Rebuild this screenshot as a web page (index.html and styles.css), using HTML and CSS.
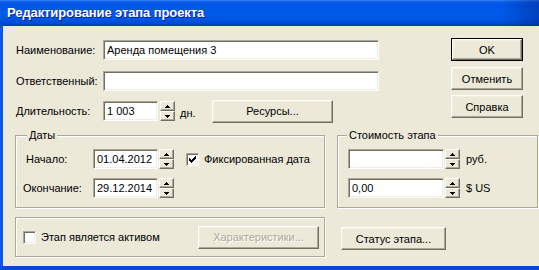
FILE: index.html
```html
<!DOCTYPE html>
<html lang="ru">
<head>
<meta charset="utf-8">
<title>Редактирование этапа проекта</title>
<link rel="stylesheet" href="styles.css">
</head>
<body>
<div class="window">
  <div class="titlebar"><span class="title">Редактирование этапа проекта</span></div>
  <div class="frame">
    <div class="client">
      <div class="top">
        <div class="fields">
          <div class="row r1">
            <span class="lbl">Наименование:</span>
            <div class="input w-name">Аренда помещения 3</div>
          </div>
          <div class="row r2">
            <span class="lbl">Ответственный:</span>
            <div class="input w-name"></div>
          </div>
          <div class="row r3">
            <span class="lbl">Длительность:</span>
            <div class="input w-dur">1 003</div>
            <div class="spin"><span class="up"><svg width="5" height="3" viewBox="0 0 5 3"><path d="M2 0h1v1h1v1h1v1H0V2h1V1h1z"/></svg></span><span class="down"><svg width="5" height="3" viewBox="0 0 5 3"><path d="M0 0h5v1H4v1H3v1H2V2H1V1H0z"/></svg></span></div>
            <span class="unit-dn">дн.</span>
            <button class="btn w-res">Ресурсы...</button>
          </div>
        </div>
        <div class="actions">
          <div class="default"><button class="btn w-act">OK</button></div>
          <button class="btn w-act a2">Отменить</button>
          <button class="btn w-act a3">Справка</button>
        </div>
      </div>

      <div class="middle">
        <div class="group dates">
          <span class="legend lg-dates">Даты</span>
          <div class="grow g1">
            <span class="dl dl1">Начало:</span>
            <div class="input w-date">01.04.2012</div>
            <div class="spin"><span class="up"><svg width="5" height="3" viewBox="0 0 5 3"><path d="M2 0h1v1h1v1h1v1H0V2h1V1h1z"/></svg></span><span class="down"><svg width="5" height="3" viewBox="0 0 5 3"><path d="M0 0h5v1H4v1H3v1H2V2H1V1H0z"/></svg></span></div>
            <span class="check fix"><svg width="7" height="7" viewBox="0 0 7 7"><path d="M6 0h1v3H6v1H5v1H4v1H3v1H2V6H1V5H0V2h1v1h1v1h1V3h1V2h1V1h1z"/></svg></span>
            <span class="fix-lbl">Фиксированная дата</span>
          </div>
          <div class="grow g2">
            <span class="dl dl2">Окончание:</span>
            <div class="input w-date">29.12.2014</div>
            <div class="spin"><span class="up"><svg width="5" height="3" viewBox="0 0 5 3"><path d="M2 0h1v1h1v1h1v1H0V2h1V1h1z"/></svg></span><span class="down"><svg width="5" height="3" viewBox="0 0 5 3"><path d="M0 0h5v1H4v1H3v1H2V2H1V1H0z"/></svg></span></div>
          </div>
        </div>
        <div class="group cost">
          <span class="legend lg-cost">Стоимость этапа</span>
          <div class="grow g1 cost-row">
            <div class="input w-cost"></div>
            <div class="spin"><span class="up"><svg width="5" height="3" viewBox="0 0 5 3"><path d="M2 0h1v1h1v1h1v1H0V2h1V1h1z"/></svg></span><span class="down"><svg width="5" height="3" viewBox="0 0 5 3"><path d="M0 0h5v1H4v1H3v1H2V2H1V1H0z"/></svg></span></div>
            <span class="cur">руб.</span>
          </div>
          <div class="grow g2 cost-row">
            <div class="input w-cost">0,00</div>
            <div class="spin"><span class="up"><svg width="5" height="3" viewBox="0 0 5 3"><path d="M2 0h1v1h1v1h1v1H0V2h1V1h1z"/></svg></span><span class="down"><svg width="5" height="3" viewBox="0 0 5 3"><path d="M0 0h5v1H4v1H3v1H2V2H1V1H0z"/></svg></span></div>
            <span class="cur">$ US</span>
          </div>
        </div>
      </div>

      <div class="bottom">
        <div class="group asset">
          <div class="asset-left">
            <span class="check empty"></span>
            <span class="asset-lbl">Этап является активом</span>
          </div>
          <button class="btn w-char" disabled>Характеристики...</button>
        </div>
        <button class="btn w-status">Статус этапа...</button>
      </div>
    </div>
  </div>
</div>
</body>
</html>
```

FILE: styles.css
```css
* { box-sizing: border-box; }
html, body { margin: 0; padding: 0; }
body {
  width: 539px;
  height: 270px;
  overflow: hidden;
  background: #ECE9D8;
  font-family: "Liberation Sans", Arial, sans-serif;
  font-size: 11px;
  color: #000;
}
.window {
  width: 539px;
  height: 270px;
  display: flex;
  flex-direction: column;
}
.titlebar {
  height: 26px;
  flex: none;
  display: flex;
  align-items: center;
  padding-left: 7px;
  padding-bottom: 1px;
  background:
    linear-gradient(to right, rgba(0,20,110,0) 93%, rgba(0,20,110,0.35) 100%),
    linear-gradient(#3a8cf8 0, #1766ee 1px, #0558e8 3px, #0055e5 6px, #005be9 13px, #0056e4 19px, #004dd8 23px, #0042c4 25px, #003bb4 26px);
}
.title {
  color: #fff;
  font-weight: bold;
  font-size: 13px;
  letter-spacing: -0.1px;
  text-shadow: 1px 1px 0 #0a1e8c;
}
.frame {
  flex: 1;
  display: flex;
  min-width: 0;
  border-left: 3px solid #0a5ae8;
  border-bottom: 4px solid #0846d6;
  box-shadow: inset 1px 0 0 #0035c0;
}
.client {
  flex: 1;
  min-width: 0;
  background: #ECE9D8;
  padding: 12px 0 0 12px;
}

/* ---------- common controls ---------- */
.input {
  height: 20px;
  background: #fff;
  border: 1px solid;
  border-color: #ACA899 #fff #fff #ACA899;
  box-shadow: inset 1px 1px 0 #716F64, inset -1px -1px 0 #F1EFE2;
  padding: 0 0 0 3px;
  display: flex;
  align-items: center;
  white-space: nowrap;
}
.btn {
  font: inherit;
  color: #000;
  height: 23px;
  padding: 0;
  margin: 0;
  background: #ECE9D8;
  border: 1px solid;
  border-color: #fff #716F64 #716F64 #fff;
  box-shadow: inset -1px -1px 0 #ACA899, inset 1px 1px 0 #F1EFE2;
  border-radius: 0;
  text-align: center;
}
.btn:disabled {
  color: #ACA899;
  text-shadow: 1px 1px 0 #fff;
}
.default {
  border: 1px solid #000;
  width: 72px;
  height: 23px;
}
.default .btn {
  width: 70px;
  height: 21px;
}
.spin {
  width: 15px;
  height: 20px;
  display: flex;
  flex-direction: column;
  flex: none;
}
.spin > span {
  flex: 1;
  display: flex;
  align-items: center;
  justify-content: center;
  background: #ECE9D8;
  border: 1px solid;
  border-color: #fff #716F64 #716F64 #fff;
  box-shadow: inset -1px -1px 0 #ACA899;
}
.spin svg { display: block; fill: #000; }
.check {
  width: 13px;
  height: 13px;
  flex: none;
  background: #fff;
  border: 1px solid;
  border-color: #ACA899 #fff #fff #ACA899;
  box-shadow: inset 1px 1px 0 #716F64, inset -1px -1px 0 #F1EFE2;
  display: flex;
  align-items: center;
  justify-content: center;
}
.check svg { display: block; fill: #000; }

/* ---------- top section ---------- */
.top {
  display: flex;
  justify-content: space-between;
  align-items: flex-start;
  padding-right: 16px;
}
.fields { margin-top: 2px; }
.row {
  display: flex;
  align-items: center;
}
.r1, .r2 { height: 20px; }
.r2 { margin-top: 11px; }
.r3 { height: 22px; margin-top: 9px; }
.lbl {
  width: 88px;
  padding-left: 1px;
  white-space: nowrap;
}
.w-name { width: 276px; }
.w-dur { width: 55px; }
.r3 .spin { margin-left: 2px; }
.unit-dn { width: 37px; padding-left: 5px; padding-top: 3px; }
.w-res { width: 121px; }

.actions {
  display: flex;
  flex-direction: column;
}
.w-act { width: 72px; }
.a2 { margin-top: 6px; }
.a3 { margin-top: 5px; }

/* ---------- groups ---------- */
.middle {
  display: flex;
  margin-top: 13px;
}
.group {
  flex: none;
  border: 1px solid #ACA899;
  box-shadow: 1px 1px 0 #fff, inset 1px 1px 0 #fff;
}
.legend {
  display: table;
  background: #ECE9D8;
  line-height: 13px;
  height: 13px;
  margin-top: -7px;
  padding: 0 2px;
  white-space: nowrap;
}
.dates { width: 310px; height: 73px; }
.cost { width: 201px; height: 73px; margin-left: 12px; }
.lg-dates { margin-left: 11px; }
.lg-cost { margin-left: 9px; }
.grow {
  display: flex;
  align-items: center;
  height: 20px;
}
.g1 { margin-top: 7px; }
.g2 { margin-top: 9px; }
.dl { width: 77px; white-space: nowrap; }
.dl1 { padding-left: 10px; }
.dl2 { padding-left: 7px; }
.w-date { width: 65px; }
.g1 .spin, .g2 .spin { margin-left: 1px; }
.fix { margin-left: 12px; }
.fix-lbl { margin-left: 5px; white-space: nowrap; }
.cost-row { padding-left: 10px; }
.w-cost { width: 96px; }
.cost-row .spin { margin-left: 1px; }
.cur { margin-left: 6px; white-space: nowrap; }

/* ---------- bottom ---------- */
.bottom {
  display: flex;
  align-items: flex-start;
  margin-top: 9px;
}
.asset {
  width: 310px;
  height: 40px;
  display: flex;
  align-items: center;
  justify-content: space-between;
  padding: 0 5px 0 7px;
}
.asset-left { display: flex; align-items: center; }
.asset-lbl { margin-left: 5px; white-space: nowrap; }
.w-char { width: 121px; }
.w-status { width: 105px; margin-left: 16px; margin-top: 10px; }
```
